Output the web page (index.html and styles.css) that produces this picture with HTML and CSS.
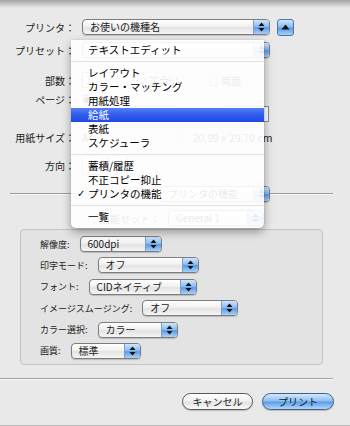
FILE: index.html
```html
<!DOCTYPE html>
<html lang="ja">
<head>
  <meta charset="UTF-8" />
  <title>プリント</title>
  <link rel="stylesheet" href="styles.css">
</head>
<body>
  <div class="sheet">
    <div class="row row-printer">
      <span class="label">プリンタ：</span>
      <div class="popup popup-wide">
        <span class="popup-text">お使いの機種名</span>
        <span class="popup-arrows"><svg width="7" height="10" viewBox="0 0 7 10"><path d="M3.5 0.5 L6.5 4 L0.5 4 Z M0.5 6 L6.5 6 L3.5 9.5 Z" fill="#111"/></svg></span>
      </div>
      <span class="disclose"><svg width="9" height="6" viewBox="0 0 9 6"><path d="M4.5 0.5 L8.5 5.5 L0.5 5.5 Z" fill="#111"/></svg></span>
    </div>

    <div class="row row-preset">
      <span class="label">プリセット：</span>
      <div class="popup popup-wide">
        <span class="popup-text">標準</span>
        <span class="popup-arrows"><svg width="7" height="10" viewBox="0 0 7 10"><path d="M3.5 0.5 L6.5 4 L0.5 4 Z M0.5 6 L6.5 6 L3.5 9.5 Z" fill="#111"/></svg></span>
      </div>
    </div>

    <div class="row row-copies">
      <span class="label">部数：</span>
      <span class="field field-copies">1</span>
      <span class="option">✓ 丁合い</span>
      <span class="option">□ 両面</span>
    </div>

    <div class="row row-pages">
      <span class="label">ページ：</span>
      <span class="option">◉ すべて</span>
    </div>

    <div class="row row-range">
      <span class="label"></span>
      <span class="option option-tight">○ 開始：</span>
      <span class="field field-range"></span>
      <span class="option option-tight">終了：</span>
      <span class="field field-range"></span>
    </div>

    <div class="row row-paper">
      <span class="label">用紙サイズ：</span>
      <span class="option">A4</span>
      <span class="paper-icon"></span>
      <span class="paper-size">20.99 x 29.70 cm</span>
    </div>

    <div class="row row-orient">
      <span class="label">方向：</span>
      <span class="orient-icon"></span>
      <span class="orient-icon"></span>
    </div>

    <div class="row row-panel">
      <span class="rule rule-left"></span>
      <div class="popup popup-panel">
        <span class="popup-text">プリンタの機能</span>
        <span class="popup-arrows"><svg width="7" height="10" viewBox="0 0 7 10"><path d="M3.5 0.5 L6.5 4 L0.5 4 Z M0.5 6 L6.5 6 L3.5 9.5 Z" fill="#111"/></svg></span>
      </div>
      <span class="rule rule-right"></span>
    </div>

    <div class="row row-featureset">
      <span class="featureset-label">機能セット：</span>
      <div class="popup popup-featureset">
        <span class="popup-text">General 1</span>
        <span class="popup-arrows"><svg width="7" height="10" viewBox="0 0 7 10"><path d="M3.5 0.5 L6.5 4 L0.5 4 Z M0.5 6 L6.5 6 L3.5 9.5 Z" fill="#111"/></svg></span>
      </div>
    </div>

    <div class="group">
      <div class="group-row">
        <span class="group-label">解像度:</span>
        <div class="popup popup-res">
          <span class="popup-text">600dpi</span>
          <span class="popup-arrows"><svg width="7" height="10" viewBox="0 0 7 10"><path d="M3.5 0.5 L6.5 4 L0.5 4 Z M0.5 6 L6.5 6 L3.5 9.5 Z" fill="#111"/></svg></span>
        </div>
      </div>
      <div class="group-row">
        <span class="group-label">印字モード:</span>
        <div class="popup popup-mode">
          <span class="popup-text">オフ</span>
          <span class="popup-arrows"><svg width="7" height="10" viewBox="0 0 7 10"><path d="M3.5 0.5 L6.5 4 L0.5 4 Z M0.5 6 L6.5 6 L3.5 9.5 Z" fill="#111"/></svg></span>
        </div>
      </div>
      <div class="group-row">
        <span class="group-label">フォント:</span>
        <div class="popup popup-font">
          <span class="popup-text">CIDネイティブ</span>
          <span class="popup-arrows"><svg width="7" height="10" viewBox="0 0 7 10"><path d="M3.5 0.5 L6.5 4 L0.5 4 Z M0.5 6 L6.5 6 L3.5 9.5 Z" fill="#111"/></svg></span>
        </div>
      </div>
      <div class="group-row">
        <span class="group-label">イメージスムージング:</span>
        <div class="popup popup-smooth">
          <span class="popup-text">オフ</span>
          <span class="popup-arrows"><svg width="7" height="10" viewBox="0 0 7 10"><path d="M3.5 0.5 L6.5 4 L0.5 4 Z M0.5 6 L6.5 6 L3.5 9.5 Z" fill="#111"/></svg></span>
        </div>
      </div>
      <div class="group-row">
        <span class="group-label">カラー選択:</span>
        <div class="popup popup-color">
          <span class="popup-text">カラー</span>
          <span class="popup-arrows"><svg width="7" height="10" viewBox="0 0 7 10"><path d="M3.5 0.5 L6.5 4 L0.5 4 Z M0.5 6 L6.5 6 L3.5 9.5 Z" fill="#111"/></svg></span>
        </div>
      </div>
      <div class="group-row">
        <span class="group-label">画質:</span>
        <div class="popup popup-quality">
          <span class="popup-text">標準</span>
          <span class="popup-arrows"><svg width="7" height="10" viewBox="0 0 7 10"><path d="M3.5 0.5 L6.5 4 L0.5 4 Z M0.5 6 L6.5 6 L3.5 9.5 Z" fill="#111"/></svg></span>
        </div>
      </div>
    </div>

    <div class="bottom-rule"></div>

    <div class="buttons">
      <span class="btn btn-cancel">キャンセル</span>
      <span class="btn btn-print">プリント</span>
    </div>

    <ul class="menu">
      <li class="menu-item">テキストエディット</li>
      <li class="menu-sep"></li>
      <li class="menu-item">レイアウト</li>
      <li class="menu-item">カラー・マッチング</li>
      <li class="menu-item">用紙処理</li>
      <li class="menu-item selected">給紙</li>
      <li class="menu-item">表紙</li>
      <li class="menu-item">スケジューラ</li>
      <li class="menu-sep"></li>
      <li class="menu-item">蓄積/履歴</li>
      <li class="menu-item">不正コピー抑止</li>
      <li class="menu-item checked">プリンタの機能</li>
      <li class="menu-sep"></li>
      <li class="menu-item">一覧</li>
    </ul>
  </div>
</body>
</html>
```

FILE: styles.css
```css
body {
  margin: 0;
  font-family: "Noto Sans CJK JP", "DejaVu Sans", sans-serif;
  font-size: 10px;
  color: #1a1a1a;
  background: #e9e9e9;
}

.sheet {
  position: relative;
  width: 350px;
  height: 426px;
  box-sizing: border-box;
  padding-top: 19px;
  background: linear-gradient(#a4a4a4, #e9e9e9 8px) no-repeat;
  border-bottom: 1px solid #b8b8b8;
  overflow: hidden;
}

.row {
  display: flex;
  align-items: center;
  height: 16px;
}

.label {
  width: 75px;
  text-align: right;
  margin-right: 7px;
  white-space: nowrap;
  flex-shrink: 0;
}

.row-preset { margin-top: 7px; }
.row-copies { margin-top: 14px; }
.row-pages { margin-top: 4px; height: 14px; }
.row-range { height: 16px; width: 269px; }
.row-paper { margin-top: 7px; }
.row-orient { margin-top: 10px; height: 20px; }
.row-panel { margin-top: 11px; }
.row-featureset { margin-top: 8px; padding-left: 100px; }

/* aqua popup buttons */
.popup {
  display: flex;
  align-items: center;
  height: 16px;
  box-sizing: border-box;
  border: 1px solid #7d7d7d;
  border-radius: 4px;
  background: linear-gradient(#ffffff, #f1f1f1 45%, #e3e3e3 55%, #f6f6f6);
  box-shadow: 0 1px 1px rgba(0, 0, 0, 0.18);
  overflow: hidden;
  flex-shrink: 0;
}

.popup-text {
  flex: 1;
  padding-left: 7px;
  white-space: nowrap;
  line-height: 14px;
}

.popup-arrows {
  display: flex;
  align-items: center;
  justify-content: center;
  width: 15px;
  height: 100%;
  border-left: 1px solid #7f9cc4;
  background: linear-gradient(#cfe5fb, #8dbef2 45%, #5b9be6 55%, #a9d2f8);
}

.popup-wide { width: 188px; }
.popup-panel { width: 110px; }
.popup-featureset { width: 96px; margin-left: 8px; }

.disclose {
  display: flex;
  align-items: center;
  justify-content: center;
  width: 17px;
  height: 17px;
  margin-left: 7px;
  box-sizing: border-box;
  border: 1px solid #4f74a6;
  border-radius: 3px;
  background: linear-gradient(#cfe5fb, #8dbef2 45%, #5b9be6 55%, #a9d2f8);
}

/* controls that are mostly under the menu */
.field {
  display: inline-block;
  height: 16px;
  box-sizing: border-box;
  border: 1px solid #8a8a8a;
  background: #fff;
  line-height: 14px;
  padding-left: 3px;
}

.field-copies { width: 36px; margin-right: 22px; }
.field-range { width: 44px; margin: 0 8px; }
.row-range .field-range:last-child { margin: 0 0 0 auto; }

.option { margin-right: 30px; white-space: nowrap; }
.option-tight { margin-right: 0; }

.paper-icon {
  width: 12px;
  height: 12px;
  margin-left: 52px;
  border-radius: 50%;
  background: #c9dcf3;
}

.paper-size {
  margin-left: 5px;
  white-space: nowrap;
  font-size: 10.5px;
}

.orient-icon {
  width: 18px;
  height: 18px;
  margin-right: 6px;
  border: 1px solid #999;
  border-radius: 3px;
  background: #f4f4f4;
}

.rule {
  height: 0;
  border-top: 1px solid #9c9c9c;
  border-bottom: 1px solid #f6f6f6;
}

.rule-left { flex: 1; margin-left: 10px; }
.rule-right { width: 63px; margin-right: 17px; }

.featureset-label { white-space: nowrap; }

/* group box */
.group {
  display: flex;
  flex-direction: column;
  gap: 5.4px;
  margin: 3px 27px 0 20px;
  height: 136px;
  box-sizing: border-box;
  padding: 6px 0 0 19px;
  border: 1px solid #c3c3c3;
  border-radius: 4px;
  background: #e3e3e3;
}

.group-row {
  display: flex;
  align-items: center;
  height: 16px;
}

.group-label {
  font-size: 9px;
  margin-right: 10px;
  white-space: nowrap;
}

.popup-res { width: 82px; }
.popup-mode { width: 101px; }
.popup-font { width: 108px; }
.popup-smooth { width: 96px; }
.popup-color { width: 80px; }
.popup-quality { width: 70px; }

.bottom-rule {
  margin: 13px 17px 0 0;
  border-top: 1px solid #a2a2a2;
  border-bottom: 1px solid #f6f6f6;
}

.buttons {
  display: flex;
  justify-content: flex-end;
  gap: 9px;
  margin-top: 13px;
  padding-right: 16px;
}

.btn {
  display: flex;
  align-items: center;
  justify-content: center;
  height: 17px;
  box-sizing: border-box;
  border: 1px solid #585858;
  border-radius: 9px;
  box-shadow: 0 1px 1px rgba(0, 0, 0, 0.2);
}

.btn-cancel {
  width: 71px;
  background: linear-gradient(#ffffff, #f2f2f2 45%, #e2e2e2 55%, #fafafa);
}

.btn-print {
  width: 72px;
  border-color: #3f5f8c;
  background: linear-gradient(#d3e8fc, #8fc0f3 45%, #5d9de7 55%, #b2d8fa);
}

/* menu */
.menu {
  position: absolute;
  left: 71px;
  top: 40px;
  width: 193px;
  margin: 0;
  padding: 3px 0 4px;
  list-style: none;
  background: rgba(255, 255, 255, 0.91);
  border-radius: 0 0 5px 5px;
  box-shadow: 0 4px 10px rgba(0, 0, 0, 0.35), 0 0 1px rgba(0, 0, 0, 0.3);
  font-size: 10.5px;
  color: #000;
}

.menu-item {
  height: 14px;
  line-height: 14px;
  padding-left: 17px;
  white-space: nowrap;
}

.menu-item.selected {
  color: #fff;
  background: linear-gradient(#5580f6, #2f5bee 50%, #1d48e6);
}

.menu-item.checked {
  position: relative;
}

.menu-item.checked::before {
  content: "✓";
  position: absolute;
  left: 6px;
  font-family: "DejaVu Sans", sans-serif;
  font-weight: bold;
  font-size: 10px;
}

.menu-sep {
  height: 9px;
  background: linear-gradient(transparent 4px, #e2e2e2 4px, #e2e2e2 5px, transparent 5px);
}
```
